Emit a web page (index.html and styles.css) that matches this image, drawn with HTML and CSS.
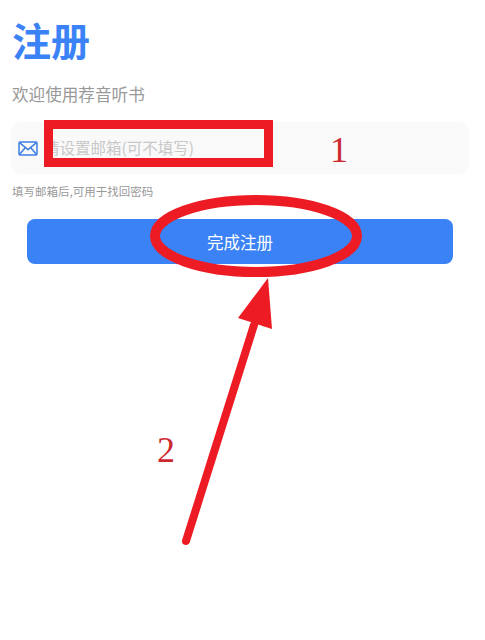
FILE: index.html
```html
<!DOCTYPE html>
<html lang="zh">
  <head>
    <meta charset="UTF-8" />
    <meta name="viewport" content="width=device-width, initial-scale=1.0" />
    <title>注册</title>
    <link rel="stylesheet" href="styles.css">
  </head>
  <body>
    <div class="page">
      <h1 class="title">注册</h1>
      <p class="subtitle">欢迎使用荐音听书</p>
      <div class="field">
        <svg class="field-icon" width="20" height="15" viewBox="0 0 20 15" fill="none" stroke="#3f7fe0" stroke-width="1.5" stroke-linejoin="round">
          <rect x="1" y="1" width="18" height="13" rx="1" />
          <path d="M1.5 1.6 L10 8.6 L18.5 1.6" />
          <path d="M1.5 13.5 L7.4 6.5 M18.5 13.5 L12.6 6.5" />
        </svg>
        <input class="field-input" type="text" placeholder="请设置邮箱(可不填写)">
      </div>
      <p class="hint">填写邮箱后,可用于找回密码</p>
      <button class="submit">完成注册</button>
    </div>

    <!-- 标注 -->
    <svg class="marks" width="485" height="640" viewBox="0 0 485 640">
      <rect class="mark" x="48.5" y="124.5" width="220" height="38" />
      <ellipse class="mark mark-ring" cx="256" cy="236" rx="101" ry="36" />
      <path class="mark mark-line" d="M186 541 L254 325" />
      <polygon class="mark-head" points="268,278 238,318 272,329" />
      <text class="mark-num" x="330" y="162">1</text>
      <text class="mark-num" x="157" y="462">2</text>
    </svg>
  </body>
</html>
```

FILE: styles.css
```css
* {
  margin: 0;
  padding: 0;
  box-sizing: border-box;
}

body {
  font-family: "Noto Sans CJK SC", "Liberation Sans", sans-serif;
  background-color: #fff;
  position: relative;
  height: 640px;
  overflow: hidden;
}

.page {
  padding: 11px 16px 0 11px;
}

.title {
  font-size: 39px;
  line-height: 56px;
  font-weight: 700;
  color: #3b82f6;
  padding-left: 1px;
}

.subtitle {
  margin-top: 13px;
  font-size: 16.6px;
  line-height: 28px;
  color: #999;
  padding-left: 1px;
}

.field {
  display: flex;
  align-items: center;
  gap: 6px;
  height: 52px;
  margin-top: 14px;
  padding-left: 7px;
  background-color: #f9f9f9;
  border-radius: 10px;
}

.field-icon {
  flex-shrink: 0;
}

.field-input {
  flex: 1;
  min-width: 0;
  height: 50px;
  margin-bottom: 2px;
  border: none;
  outline: none;
  background: transparent;
  font-family: inherit;
  font-size: 15.5px;
  color: #333;
}

.field-input::placeholder {
  color: #c8c8c8;
  opacity: 1;
}

.hint {
  margin-top: 8px;
  font-size: 11.5px;
  line-height: 18px;
  color: #999;
  padding-left: 1px;
}

.submit {
  display: block;
  width: 426px;
  height: 45px;
  margin: 19px 0 0 16px;
  border: none;
  border-radius: 8px;
  background-color: #3b82f6;
  color: #fff;
  font-family: inherit;
  font-size: 16.5px;
}

.marks {
  position: absolute;
  top: 0;
  left: 0;
}

.mark {
  fill: none;
  stroke: #ed1c24;
  stroke-width: 9;
}

.mark-ring {
  stroke-width: 10;
}

.mark-line {
  stroke-width: 8;
  stroke-linecap: round;
}

.mark-head {
  fill: #ed1c24;
}

.mark-num {
  font-family: "Liberation Serif", serif;
  font-size: 36px;
  fill: #cc2a30;
}
```
